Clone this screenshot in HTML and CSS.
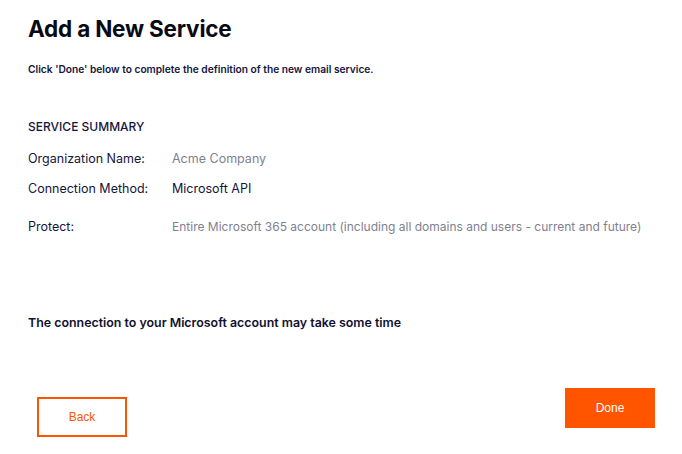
FILE: index.html
```html
<!DOCTYPE html>
<html>
<head>
<meta charset="utf-8">
<link rel="stylesheet" href="styles.css">
</head>
<body>
<div class="page">
  <h1 class="title">Add a New Service</h1>
  <p class="intro">Click 'Done' below to complete the definition of the new email service.</p>
  <h2 class="section">SERVICE SUMMARY</h2>
  <div class="summary">
    <div class="row row-org"><span class="label">Organization Name:</span><span class="value muted">Acme Company</span></div>
    <div class="row row-conn"><span class="label">Connection Method:</span><span class="value">Microsoft API</span></div>
    <div class="row row-protect"><span class="label">Protect:</span><span class="value muted long">Entire Microsoft 365 account (including all domains and users - current and future)</span></div>
  </div>
  <p class="note">The connection to your Microsoft account may take some time</p>
  <div class="actions">
    <button class="btn btn-back">Back</button>
    <button class="btn btn-done">Done</button>
  </div>
</div>
</body>
</html>
```
FILE: styles.css
```css
html, body {
  margin: 0;
  padding: 0;
  background: #ffffff;
}
body {
  font-family: Inter, "Noto Sans", sans-serif;
  color: #11112e;
}
.page {
  width: 682px;
  height: 454px;
  box-sizing: border-box;
  padding: 14px 27px 0 28px;
  display: flex;
  flex-direction: column;
}
.title {
  margin: 0;
  font-size: 22.5px;
  line-height: 30px;
  font-weight: 700;
  color: #0a0a14;
  letter-spacing: -0.2px;
}
.intro {
  margin: 19px 0 0;
  font-size: 10.2px;
  line-height: 12px;
  font-weight: 600;
  color: #14143c;
}
.section {
  margin: 44px 0 0;
  font-size: 12px;
  line-height: 16px;
  font-weight: 500;
  color: #14143c;
}
.summary {
  display: flex;
  flex-direction: column;
}
.row {
  display: flex;
  font-size: 12.5px;
  line-height: 16px;
}
.row-org { margin-top: 16px; }
.row-conn { margin-top: 14px; }
.row-protect { margin-top: 22px; }
.label {
  width: 144px;
  flex: none;
  color: #14143c;
}
.value {
  color: #14143c;
  white-space: nowrap;
}
.muted {
  color: #7f7f92;
}
.long {
  font-size: 12px;
}
.note {
  margin: 80px 0 0;
  font-size: 12.4px;
  line-height: 16px;
  font-weight: 600;
  color: #11112e;
}
.actions {
  display: flex;
  justify-content: space-between;
  align-items: flex-start;
  padding: 0 0 0 9px;
  margin-top: 57px;
}
.btn {
  width: 90px;
  height: 40px;
  box-sizing: border-box;
  font-family: "Liberation Sans", Arial, sans-serif;
  font-size: 12px;
  cursor: pointer;
  border-radius: 0;
}
.btn-back {
  background: #ffffff;
  border: 2px solid #ff5500;
  color: #ff5500;
  margin-top: 9px;
}
.btn-done {
  background: #ff5500;
  border: none;
  color: #ffffff;
}
```
